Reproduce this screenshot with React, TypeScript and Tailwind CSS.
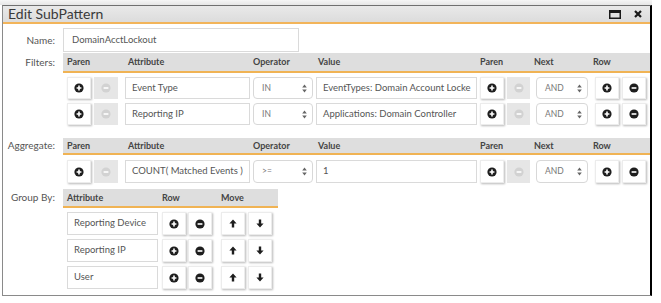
import React from "react";

const PlusIcon = ({ disabled = false }: { disabled?: boolean }) => (
  <svg width="10" height="10" viewBox="0 0 10 10">
    <circle cx="5" cy="5" r="4.6" fill={disabled ? "#d2d2d2" : "#1e1e1e"} />
    <path d="M5 2.6V7.4M2.6 5H7.4" stroke="#fff" strokeWidth="1.6" />
  </svg>
);

const MinusIcon = ({ disabled = false }: { disabled?: boolean }) => (
  <svg width="10" height="10" viewBox="0 0 10 10">
    <circle cx="5" cy="5" r="4.6" fill={disabled ? "#d2d2d2" : "#1e1e1e"} />
    <path d="M2.6 5H7.4" stroke="#fff" strokeWidth="1.6" />
  </svg>
);

const ArrowUp = () => (
  <svg width="8" height="9" viewBox="0 0 8 9">
    <path d="M4 0.5L7.6 4.4H5.2V8.5H2.8V4.4H0.4Z" fill="#1e1e1e" />
  </svg>
);

const ArrowDown = () => (
  <svg width="8" height="9" viewBox="0 0 8 9">
    <path d="M4 8.5L7.6 4.6H5.2V0.5H2.8V4.6H0.4Z" fill="#1e1e1e" />
  </svg>
);

const Btn = ({ children, w = "w-[24px]" }: { children: React.ReactNode; w?: string }) => (
  <div
    className={`${w} h-full shrink-0 bg-white border border-[#ececec] shadow-[1px_1px_2px_rgba(0,0,0,0.28)] flex items-center justify-center`}
  >
    {children}
  </div>
);

const DisBtn = ({ w = "w-[24px]" }: { w?: string }) => (
  <div className={`${w} h-full shrink-0 bg-[#e6e6e6] flex items-center justify-center`}>
    <MinusIcon disabled />
  </div>
);

const Input = ({ text, w }: { text: string; w: string }) => (
  <div
    className={`${w} h-full shrink-0 bg-white border border-[#dadada] pl-[6px] flex items-center overflow-hidden whitespace-nowrap text-[9.5px] text-[#555]`}
  >
    {text}
  </div>
);

const Select = ({ text, w }: { text: string; w: string }) => (
  <div
    className={`${w} h-full shrink-0 bg-white border border-[#d8d8d8] rounded-[4px] pl-[8px] pr-[5px] flex items-center justify-between text-[8.5px] text-[#777]`}
  >
    <span>{text}</span>
    <svg width="5" height="9" viewBox="0 0 5 9">
      <path d="M2.5 0.5L4.8 3.6H0.2Z M2.5 8.5L4.8 5.4H0.2Z" fill="#666" />
    </svg>
  </div>
);

const Label = ({ text, h }: { text: string; h: string }) => (
  <div className={`w-[60px] shrink-0 pr-[8px] text-right text-[10px] text-[#555] ${h} flex items-center justify-end`}>
    {text}
  </div>
);

const FilterHeader = ({ h }: { h: string }) => (
  <div className={`${h} bg-[#dedede] border-b-2 border-[#f0b354] flex items-center pl-[4px] text-[9px] font-bold text-[#444]`}>
    <span className="w-[61px]">Paren</span>
    <span className="w-[125px]">Attribute</span>
    <span className="w-[65px]">Operator</span>
    <span className="w-[162px]">Value</span>
    <span className="w-[54px]">Paren</span>
    <span className="w-[59px]">Next</span>
    <span>Row</span>
  </div>
);

const FilterRow = ({ attr, op, value, h = "h-[22px]" }: { attr: string; op: string; value: string; h?: string }) => (
  <div className={`${h} flex pl-[4px]`}>
    <Btn>
      <PlusIcon />
    </Btn>
    <div className="w-[3px]" />
    <DisBtn />
    <div className="w-[7px]" />
    <Input text={attr} w="w-[125px]" />
    <div className="w-[3px]" />
    <Select text={op} w="w-[60px]" />
    <div className="w-[3px]" />
    <Input text={value} w="w-[161px]" />
    <div className="w-[3px]" />
    <Btn>
      <PlusIcon />
    </Btn>
    <div className="w-[3px]" />
    <DisBtn w="w-[23px]" />
    <div className="w-[6px]" />
    <Select text="AND" w="w-[52px]" />
    <div className="w-[7px]" />
    <Btn>
      <PlusIcon />
    </Btn>
    <div className="w-[3px]" />
    <Btn>
      <MinusIcon />
    </Btn>
  </div>
);

const GroupRow = ({ attr }: { attr: string }) => (
  <div className="h-[23px] flex pl-[4px]">
    <Input text={attr} w="w-[91px]" />
    <div className="w-[4px]" />
    <Btn>
      <PlusIcon />
    </Btn>
    <div className="w-[2px]" />
    <Btn>
      <MinusIcon />
    </Btn>
    <div className="w-[9px]" />
    <Btn>
      <ArrowUp />
    </Btn>
    <div className="w-[3px]" />
    <Btn>
      <ArrowDown />
    </Btn>
  </div>
);

export default function App() {
  return (
    <div className="w-[661px] h-[303px] bg-white overflow-hidden font-['Lato',sans-serif]">
      <div className="h-[5px] bg-gradient-to-b from-[#f6f6f6] to-[#e6e6e6] w-[652px]" />
      <div className="ml-[2px] w-[650px] border-l border-l-[#8a8a8a] border-t border-t-[#707070] border-r-2 border-r-black border-b border-b-[#8a8a8a]">
        {/* Title bar */}
        <div className="h-[16px] bg-gradient-to-b from-[#e9e9e9] to-[#dcdcdc] flex items-center pl-[5px] pr-[8px]">
          <span className="text-[14px] text-[#3a3a3a] leading-none">Edit SubPattern</span>
          <div className="flex-1" />
          <svg width="12" height="9" viewBox="0 0 12 9" className="mr-[13px]">
            <rect x="0.75" y="0.75" width="10.5" height="7.5" fill="none" stroke="#1a1a1a" strokeWidth="1.5" />
            <rect x="0" y="0" width="12" height="3" fill="#1a1a1a" />
          </svg>
          <svg width="8" height="8" viewBox="0 0 8 8">
            <path d="M1 1L7 7M7 1L1 7" stroke="#1a1a1a" strokeWidth="2.2" />
          </svg>
        </div>
        <div className="h-[2px] bg-[#f2b45a]" />

        {/* Content */}
        <div className="flex flex-col">
          {/* Name */}
          <div className="flex mt-[4px] h-[24px]">
            <Label text="Name:" h="h-[24px]" />
            <div className="w-[236px] h-[24px] bg-white border border-[#dadada] pl-[8px] flex items-center text-[9.5px] text-[#555]">
              DomainAcctLockout
            </div>
          </div>

          {/* Filters */}
          <div className="flex mt-[1px]">
            <Label text="Filters:" h="h-[18px]" />
            <div className="flex-1 flex flex-col">
              <FilterHeader h="h-[20px]" />
              <div className="flex flex-col gap-[4px] pt-[4px]">
                <FilterRow attr="Event Type" op="IN" value="EventTypes: Domain Account Locke" />
                <FilterRow attr="Reporting IP" op="IN" value="Applications: Domain Controller" />
              </div>
            </div>
          </div>

          {/* Aggregate */}
          <div className="flex mt-[13px]">
            <Label text="Aggregate:" h="h-[15px]" />
            <div className="flex-1 flex flex-col">
              <FilterHeader h="h-[17px]" />
              <div className="pt-[5px]">
                <FilterRow attr="COUNT( Matched Events )" op=">=" value="1" h="h-[23px]" />
              </div>
            </div>
          </div>

          {/* Group By */}
          <div className="flex mt-[6px] pb-[6px]">
            <Label text="Group By:" h="h-[17px]" />
            <div className="flex flex-col">
              <div className="w-[215px] h-[19px] bg-[#dedede] border-b-2 border-[#f0b354] flex items-center pl-[4px] text-[9px] font-bold text-[#444]">
                <span className="w-[95px]">Attribute</span>
                <span className="w-[59px]">Row</span>
                <span>Move</span>
              </div>
              <div className="flex flex-col gap-[4px] pt-[4px]">
                <GroupRow attr="Reporting Device" />
                <GroupRow attr="Reporting IP" />
                <GroupRow attr="User" />
              </div>
            </div>
          </div>
        </div>
      </div>
    </div>
  );
}
